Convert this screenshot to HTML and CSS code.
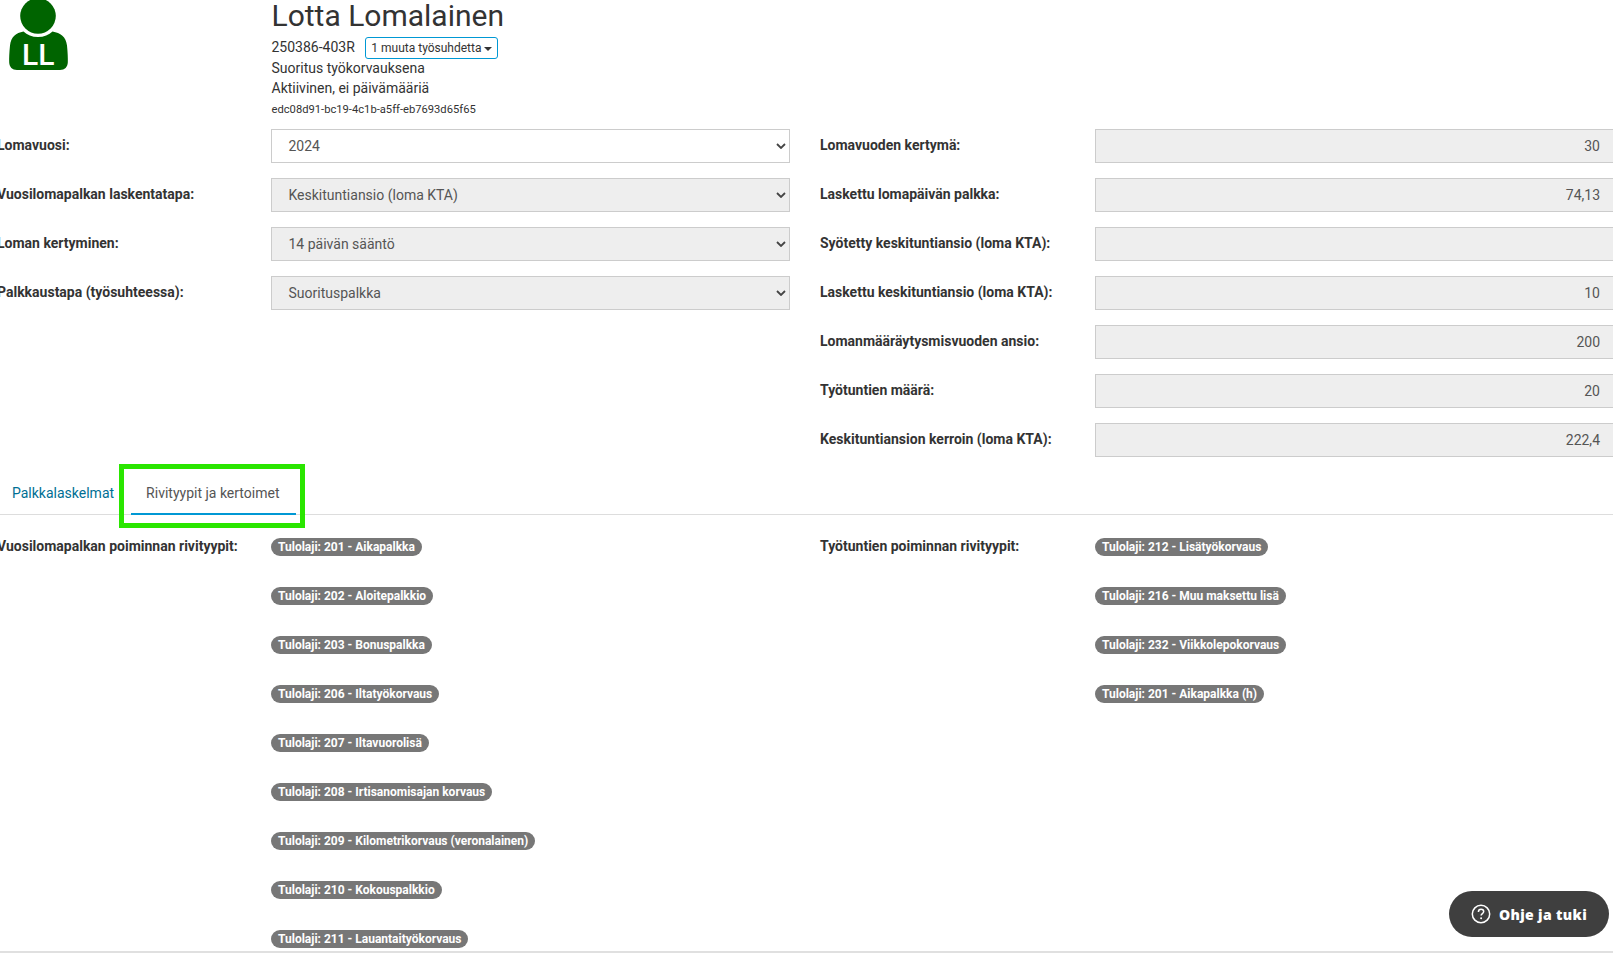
FILE: index.html
```html
<!DOCTYPE html>
<html lang="fi">
<head>
<meta charset="utf-8">
<title>Lotta Lomalainen</title>
<link rel="stylesheet" href="styles.css">
</head>
<body>
<div class="page">
  <header class="head">
    <div class="avatar">
      <svg width="62" height="72" viewBox="0 0 62 72">
        <circle cx="30" cy="16" r="17.800" fill="#006400"/>
        <path d="M15.500 31.500c3.500 3.500 8.500 5.500 14.500 5.500s11-2 14.500-5.500c8 1.500 13.500 5 14.500 14c.7 7 1 13 .8 17c-.2 4.500-3 7.500-7.800 7.500H9c-4.800 0-7.600-3-7.800-7.500c-.2-4 .1-10 .8-17c1-9 6-12.500 13.500-14z" fill="#006400"/>
      </svg>
      <span class="avatar-text">LL</span>
    </div>
    <div class="who">
      <h1 class="name">Lotta Lomalainen</h1>
      <div class="line first">250386-403R <button class="others">1 muuta työsuhdetta <i class="caret"></i></button></div>
      <div class="line">Suoritus työkorvauksena</div>
      <div class="line">Aktiivinen, ei päivämääriä</div>
      <div class="guid">edc08d91-bc19-4c1b-a5ff-eb7693d65f65</div>
    </div>
  </header>

  <section class="form">
    <div class="col">
      <div class="row"><label>Lomavuosi:</label><div class="select"><span>2024</span><svg class="chev" width="10" height="6" viewBox="0 0 10 6"><path d="M1 1l4 4 4-4" fill="none" stroke="#444" stroke-width="1.800"/></svg></div></div>
      <div class="row"><label>Vuosilomapalkan laskentatapa:</label><div class="select off"><span>Keskituntiansio (loma KTA)</span><svg class="chev" width="10" height="6" viewBox="0 0 10 6"><path d="M1 1l4 4 4-4" fill="none" stroke="#444" stroke-width="1.800"/></svg></div></div>
      <div class="row"><label>Loman kertyminen:</label><div class="select off"><span>14 päivän sääntö</span><svg class="chev" width="10" height="6" viewBox="0 0 10 6"><path d="M1 1l4 4 4-4" fill="none" stroke="#444" stroke-width="1.800"/></svg></div></div>
      <div class="row"><label>Palkkaustapa (työsuhteessa):</label><div class="select off"><span>Suorituspalkka</span><svg class="chev" width="10" height="6" viewBox="0 0 10 6"><path d="M1 1l4 4 4-4" fill="none" stroke="#444" stroke-width="1.800"/></svg></div></div>
    </div>
    <div class="col">
      <div class="row"><label>Lomavuoden kertymä:</label><div class="input">30</div></div>
      <div class="row"><label>Laskettu lomapäivän palkka:</label><div class="input">74,13</div></div>
      <div class="row"><label>Syötetty keskituntiansio (loma KTA):</label><div class="input"></div></div>
      <div class="row"><label>Laskettu keskituntiansio (loma KTA):</label><div class="input">10</div></div>
      <div class="row"><label>Lomanmääräytysmisvuoden ansio:</label><div class="input">200</div></div>
      <div class="row"><label>Työtuntien määrä:</label><div class="input">20</div></div>
      <div class="row"><label>Keskituntiansion kerroin (loma KTA):</label><div class="input">222,4</div></div>
    </div>
  </section>

  <nav class="tabs">
    <a class="tab">Palkkalaskelmat</a>
    <a class="tab active">Rivityypit ja kertoimet<span class="highlight"></span></a>
  </nav>

  <section class="form types">
    <div class="col">
      <div class="row"><label>Vuosilomapalkan poiminnan rivityypit:</label><span class="badge">Tulolaji: 201 - Aikapalkka</span></div>
      <div class="row"><label></label><span class="badge">Tulolaji: 202 - Aloitepalkkio</span></div>
      <div class="row"><label></label><span class="badge">Tulolaji: 203 - Bonuspalkka</span></div>
      <div class="row"><label></label><span class="badge">Tulolaji: 206 - Iltatyökorvaus</span></div>
      <div class="row"><label></label><span class="badge">Tulolaji: 207 - Iltavuorolisä</span></div>
      <div class="row"><label></label><span class="badge">Tulolaji: 208 - Irtisanomisajan korvaus</span></div>
      <div class="row"><label></label><span class="badge">Tulolaji: 209 - Kilometrikorvaus (veronalainen)</span></div>
      <div class="row"><label></label><span class="badge">Tulolaji: 210 - Kokouspalkkio</span></div>
      <div class="row"><label></label><span class="badge">Tulolaji: 211 - Lauantaityökorvaus</span></div>
    </div>
    <div class="col">
      <div class="row"><label>Työtuntien poiminnan rivityypit:</label><span class="badge">Tulolaji: 212 - Lisätyökorvaus</span></div>
      <div class="row"><label></label><span class="badge">Tulolaji: 216 - Muu maksettu lisä</span></div>
      <div class="row"><label></label><span class="badge">Tulolaji: 232 - Viikkolepokorvaus</span></div>
      <div class="row"><label></label><span class="badge">Tulolaji: 201 - Aikapalkka (h)</span></div>
    </div>
  </section>
</div>
<button class="help">
  <svg width="20" height="20" viewBox="0 0 20 20"><circle cx="10" cy="10" r="8.700" fill="none" stroke="#fff" stroke-width="1.500"/><path d="M7.400 8c0-1.700 1.200-2.700 2.700-2.700s2.600 1 2.600 2.300c0 2-2.600 2-2.600 4" fill="none" stroke="#fff" stroke-width="1.500"/><circle cx="10.100" cy="14.300" r="1" fill="#fff"/></svg>
  Ohje ja tuki
</button>
</body>
</html>
```

FILE: styles.css
```css
* { box-sizing: border-box; }
html, body { margin: 0; height: 100%; background: #fff; overflow: hidden; }
body { font-family: Roboto, sans-serif; font-size: 14px; line-height: 20px; color: #333; }

.page {
  height: 953px;
  overflow: hidden;
  border-bottom: 2px solid #e0e0e0;
}

.head { display: flex; height: 129px; }
.avatar { position: relative; width: 271.500px; flex: none; padding-left: 8px; }
.avatar svg { display: block; }
.avatar-text {
  position: absolute;
  left: 22px;
  top: 39px;
  font-size: 30px;
  line-height: 32px;
  font-weight: 500;
  color: #fff;
}
.who { display: flex; flex-direction: column; align-items: flex-start; }
.name { margin: 0 0 5px; font-size: 30px; line-height: 31px; font-weight: 400; color: #333; }
.line { height: 20px; }
.line.first { height: 21px; margin-top: 1px; }
.others {
  margin-left: 7px;
  padding: 0 5px;
  height: 22px;
  font: 12px/18px Roboto, sans-serif;
  color: #333;
  background: #fff;
  border: 1px solid #0098d4;
  border-radius: 3px;
}
.caret {
  display: inline-block;
  vertical-align: middle;
  border-top: 4px solid #333;
  border-left: 4px solid transparent;
  border-right: 4px solid transparent;
}
.guid { font-size: 11.200px; line-height: 20px; margin-top: 2px; }

.form { display: grid; grid-template-columns: 792px 1fr; column-gap: 30px; margin-left: -2px; }
.form > .col + .col { min-width: 0; margin-right: -60px; }
.row { display: grid; grid-template-columns: 273px 1fr; height: 49px; align-items: start; }
.col + .col .row { grid-template-columns: 275px 1fr; }
label { font-weight: 700; line-height: 32px; margin-left: -1px; }
.col + .col label { margin-left: 0; }

.select, .input {
  height: 34px;
  border: 1px solid #ccc;
  line-height: 32px;
  color: #555;
}
.select {
  display: flex;
  align-items: center;
  justify-content: space-between;
  padding: 0 3px 0 16.500px;
  background: #fff;
}
.select.off, .input { background: #eee; }
.input { text-align: right; padding-right: 72px; }

.tabs { display: flex; height: 57px; margin-top: -14px; border-bottom: 1px solid #ddd; align-items: flex-end; }
.tab { position: relative; height: 44px; line-height: 46px; padding: 0 17px 0 12px; color: #006f94; }
.tab.active { padding: 0 17px 0 15px; height: 44px; line-height: 44px; color: #555; border-bottom: 2px solid #0098d4; margin-bottom: -1px; }
.highlight {
  position: absolute;
  left: -12px;
  right: -9px;
  top: -7px;
  bottom: -15px;
  border: 5px solid #2ae600;
}

.types { padding-top: 22px; }
.types label { line-height: 18px; margin-top: 0; }
.types .row { align-items: start; justify-items: start; }
.badge {
  display: inline-block;
  height: 18px;
  padding: 0 7px;
  margin-top: 1px;
  border-radius: 9px;
  background: #777;
  color: #fff;
  font-size: 12px;
  font-weight: 700;
  line-height: 18px;
  white-space: nowrap;
}

.help {
  position: fixed;
  left: 1449px;
  top: 891px;
  display: flex;
  align-items: center;
  gap: 8px;
  width: 160px;
  height: 46px;
  padding: 0 0 0 22px;
  border: 0;
  border-radius: 23px;
  background: #3f3f3f;
  color: #fff;
  font: 800 14px "Open Sans", sans-serif;
  letter-spacing: .35px;
}
```
